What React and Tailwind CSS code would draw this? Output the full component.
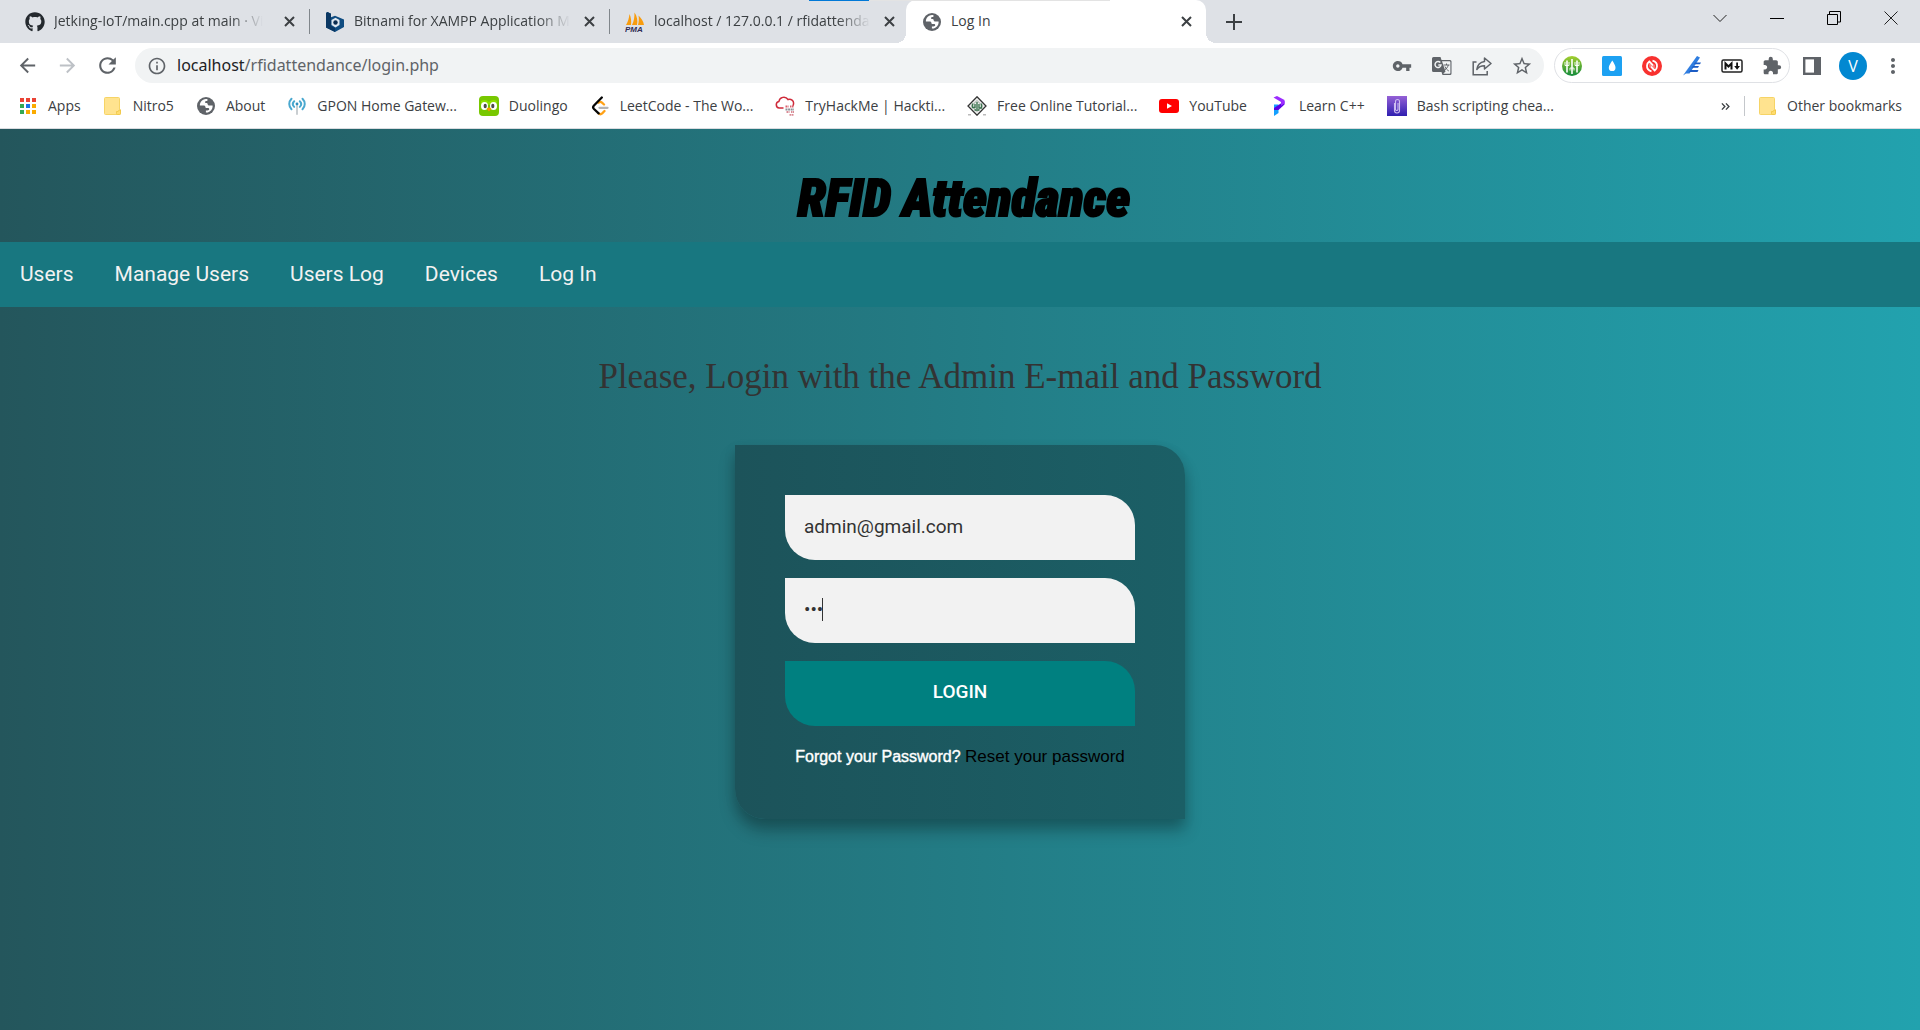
import { FaGithub } from "react-icons/fa";
import { MdVpnKey, MdExtension, MdStarBorder, MdMoreVert, MdArrowBack, MdArrowForward, MdRefresh, MdInfoOutline } from "react-icons/md";

const Globe = () => (
  <svg viewBox="0 0 18 18" className="size-[18px]">
    <circle cx="9" cy="9" r="9" fill="#5f6368" />
    <path d="M10.5 2.2c-2.6-.6-4.9.4-6.4 2.4-.9 1.2-1.3 2.6-1.2 4h3.6c1.3 0 1.9.7 2 1.7.1.6.6.8 1.3.8h1.1c.9 0 1.3.5 1.3 1.2 0 .9-.8 1.1-1.7 1.1H8.9v2.2c2.7 0 5.3-1.5 6.3-4.2.4-1 .5-2 .4-3h-3.3c-1 0-1.7-.6-1.7-1.5 0-.5-.4-.8-1-.8H8.2V4.700c0-.4.3-.7.7-.7h1c.4 0 .6-.3.6-.7z" fill="#fff" />
  </svg>
);

const Bitnami = () => (
  <svg viewBox="0 0 18 20" className="h-5 w-[18px]">
    <path d="M0 1l1.500-1L5 1.800v3.400l4-1.400 9 3.700V15l-9 5-9-4.500z" fill="#0f4c81" />
    <path d="M0 1l1.500-1L5 1.800V14l4 2.300V20l-9-4.500z" fill="#0a3763" />
    <path d="M9.500 5.800 13.500 8v5l-4 2.500-4-2.500V8z" fill="#dfe8f0" />
    <circle cx="9.500" cy="10.500" r="2.200" fill="#0a2c50" />
  </svg>
);

const PhpMyAdmin = () => (
  <svg viewBox="0 0 20 20" className="size-5">
    <path d="M1 13C3 10 4 6 4.500 2c1.500 3 2 7 1.500 11zM7 13c2-4 2.500-8 2.500-12.500C12 4 13 9 12 13zM13 13c1-3 1-7 .5-9.500C16 6 18.500 9 19 13z" fill="#f89c0e" />
    <text x="0" y="19.500" fontSize="8" fontWeight="900" fontStyle="italic" fontFamily="Liberation Sans, sans-serif" fill="#2f2d55">PMA</text>
  </svg>
);

const AppsGrid = () => {
  const colors = ["#ea4335", "#ea4335", "#ea4335", "#34a853", "#1a73e8", "#fbab00", "#34a853", "#fbab00", "#fbab00"];
  return (
    <span className="grid grid-cols-3 gap-[2px]">
      {colors.map((c, i) => (
        <svg key={i} viewBox="0 0 4 4" className="size-1"><rect width="4" height="4" fill={c} /></svg>
      ))}
    </span>
  );
};

const Folder = () => (
  <svg viewBox="0 0 18 18" className="size-[18px]">
    <path d="M1.500.5h13a1 1 0 0 1 1 1V12l1 1v3.500a1 1 0 0 1-1 1h-14a1 1 0 0 1-1-1v-15a1 1 0 0 1 1-1z" fill="#ffe38f" stroke="#f6d466" />
    <path d="M16.500 13v3.500a1 1 0 0 1-1 1h-2a1 1 0 0 1-1-1V14.500h1.700l.8-1.500z" fill="#ffdc6e" stroke="#efc545" strokeWidth=".8" />
  </svg>
);

const Antenna = () => (
  <svg viewBox="0 0 18 18" className="size-[18px]" fill="none" stroke="#4aa8cf" strokeWidth="2" strokeLinecap="round">
    <path d="M3.500 1.800c-3 3-3 7.500 0 10.500M14.500 1.800c3 3 3 7.500 0 10.500M6.200 4.200c-1.700 1.700-1.700 4 0 5.700M11.800 4.200c1.700 1.700 1.700 4 0 5.700" />
    <path d="M9 9v8" stroke="#c9ced1" />
    <circle cx="9" cy="7" r="1.400" fill="#2f8fbd" stroke="none" />
  </svg>
);

const Duolingo = () => (
  <svg viewBox="0 0 20 20" className="size-5">
    <rect width="20" height="20" rx="4" fill="#78c800" />
    <path d="M2 5c3-2 6-1 8 1 2-2 5-3 8-1v4H2z" fill="#8ee000" />
    <ellipse cx="5.500" cy="10" rx="3.500" ry="4" fill="#fff" />
    <ellipse cx="14.500" cy="10" rx="3.500" ry="4" fill="#fff" />
    <ellipse cx="6.200" cy="10" rx="1.600" ry="2.200" fill="#4b4b4b" />
    <ellipse cx="13.800" cy="10" rx="1.600" ry="2.200" fill="#4b4b4b" />
    <path d="M7.500 12.500 10 11.500l2.500 1L10 15.500z" fill="#ff9600" />
  </svg>
);

const LeetCode = () => (
  <svg viewBox="0 0 20 20" className="size-5" fill="none" strokeWidth="2.300" strokeLinecap="round">
    <path d="M14 8.500 12 6.700c-1-.9-2.500-.9-3.500 0M14.500 15l-2.300 2.400c-1 .9-2.600.9-3.600 0" stroke="#ffa116" />
    <path d="M8.600 17.400 4 13c-1-1-1-2.500 0-3.500l7.800-8" stroke="#070706" />
    <path d="M9.500 11.800h8" stroke="#b3b3b3" />
  </svg>
);

const TryHackMe = () => (
  <svg viewBox="0 0 20 20" className="size-5" fill="none">
    <path d="M8.500 12H4.200A3.300 3.300 0 0 1 3.900 5.500 5 5 0 0 1 13 3.500a4 4 0 0 1 5.500 4.400c0 .8-.3 1.300-.8 1.900" stroke="#cf2a3a" strokeWidth="1.500" />
    <path d="M10.500 10.500h3M15 10.500h4" stroke="#d9606c" strokeWidth="1.800" strokeDasharray="1.500 .5" />
    <path d="M10.500 13.500h8.500" stroke="#8b9097" strokeWidth="2" strokeDasharray="2 .6" />
    <path d="M11.500 16h3M16 16h3M14.500 18.800h4.500" stroke="#d98a94" strokeWidth="1.800" strokeDasharray="1.500 .5" />
  </svg>
);

const Tutorials = () => (
  <svg viewBox="0 0 20 20" className="size-5">
    <path d="M1 18.800h3M16 18.800h3" stroke="#bbb" strokeWidth="1.500" />
    <path d="M10 .8 19 10l-9 9.200L1 10z" fill="#eef0ee" stroke="#333" strokeWidth="1.300" />
    <path d="M10 4.500 15.500 10 10 15.500 4.500 10z" fill="none" stroke="#98a39b" strokeWidth="1" />
    <path d="M5.500 7.500v4h2.500V8m4 0v4h2.500V7.500M10 6v7M7.500 14h5" fill="none" stroke="#3d7350" strokeWidth="1.400" />
  </svg>
);

const LearnCpp = () => (
  <svg viewBox="0 0 20 20" className="size-5">
    <path d="M5 20V8.500h4.500V17z" fill="#14a0ff" />
    <path d="M5 12l10.500-7v3.500L9.500 14H5z" fill="#5a00e6" />
    <path d="M4.500 1.500 8 0l7.500 4v3.500l-3.500 2.300V6z" fill="#9b2cff" />
  </svg>
);

const Bash = () => (
  <svg viewBox="0 0 20 20" className="size-5">
    <defs><linearGradient id="bash" x1="0" y1="0" x2="0" y2="1"><stop stopColor="#9561d6" /><stop offset="1" stopColor="#2f1fb0" /></linearGradient></defs>
    <rect width="20" height="20" fill="url(#bash)" />
    <path d="M7.500 7v7.500a2.500 2.500 0 0 0 5 0V5.500a2 2 0 0 0-4 0v8a1.300 1.300 0 0 0 2.500 0V7" fill="none" stroke="#cdbcf0" strokeWidth="1.100" />
  </svg>
);

const YouTube = () => (
  <svg viewBox="0 0 20 20" className="size-5">
    <rect y="3" width="20" height="14" rx="3" fill="#f00" />
    <path d="M8 7.200v5.600l5-2.800z" fill="#fff" />
  </svg>
);

const Translate = () => (
  <svg viewBox="0 0 20 20" className="size-5">
    <path d="M1.500 1h7l1 3H18a1.500 1.500 0 0 1 1.500 1.500v12A1.500 1.500 0 0 1 18 19h-7.500l-1-3h-8A1.500 1.500 0 0 1 0 14.500v-12A1.500 1.500 0 0 1 1.500 1z" fill="#5f6368" />
    <path d="M10 5.200h7.700c.4 0 .7.300.7.700v11.200c0 .4-.3.700-.7.700h-6.500l2.300-2.300z" fill="#f1f3f4" />
    <path d="M8.300 6.600A3 3 0 1 0 9 9H6.300" fill="none" stroke="#f1f3f4" strokeWidth="1.500" />
    <path d="M11.500 9h6M14.500 7.500V9M16.300 9c-.6 2.300-2 3.800-3.500 5M13 10.500c.8 2 2 3.300 3.800 4.500" fill="none" stroke="#5f6368" strokeWidth="1" />
  </svg>
);

const Share = () => (
  <svg viewBox="0 0 20 20" className="size-5" fill="none" stroke="#5f6368" strokeWidth="1.500">
    <path d="M4.500 6H1.200v12.700h14V15" />
    <path d="M12.500 2 19 7.500 12.500 13V9.800c-3.500 0-6 1.200-7.700 3.700.6-4.300 3.200-7.300 7.700-8z" strokeLinejoin="round" />
  </svg>
);

const Forks = () => (
  <svg viewBox="0 0 20 20" className="size-5">
    <defs><linearGradient id="forks" x1="0" y1="0" x2="0" y2="1"><stop stopColor="#a4cf2e" /><stop offset="1" stopColor="#128a3c" /></linearGradient></defs>
    <circle cx="10" cy="10" r="10" fill="url(#forks)" />
    <path d="M5 4.500v12M10 3v15M15 4.500v12" fill="none" stroke="#fff" strokeWidth="1.600" />
    <path d="M3 6v3.500h4V6M8 14.500V12h4v2.500M13 6v3.500h4V6" fill="none" stroke="#fff" strokeWidth=".9" />
  </svg>
);

const Drop = () => (
  <svg viewBox="0 0 20 20" className="size-5">
    <rect width="20" height="20" rx="1.500" fill="#1da1f2" />
    <path d="M10.300 4.500c1.800 3 3.200 5 3.200 7.200a3.300 3.300 0 0 1-6.700 0c0-2.200 1.700-4.200 3.500-7.200z" fill="#fff" />
  </svg>
);

const Sync = () => (
  <svg viewBox="0 0 20 20" className="size-5">
    <circle cx="10" cy="10" r="10" fill="#f8312f" />
    <path d="M9.500 15.300C6.500 14.500 4.800 12 5 9.500c.1-1.800 1-3.200 2.300-4.100l3.700 4M10.500 4.700c3 .8 4.700 3.300 4.500 5.800-.1 1.800-1 3.200-2.300 4.100l-3.700-4" fill="none" stroke="#fff" strokeWidth="1.800" />
    <path d="M7.200 11.500V7l4.300 3zM12.800 8.500V13l-4.300-3z" fill="#fff" fillOpacity=".4" />
  </svg>
);

const Quill = () => (
  <svg viewBox="0 0 20 20" className="size-5">
    <path d="M15 0 18 1.500 7.500 17.500H4L1 19.500z" fill="#2f7de0" />
    <path d="M15 0 2 18l-.5 1L4 15z" fill="#7db4f5" />
    <path d="M13 6.500h6l-1 1.800h-6zM11 10h6l-1 1.800H9.500zM8.500 14h8l-1 2H7z" fill="#1b5cc4" />
  </svg>
);

const Markdown = () => (
  <svg viewBox="0 0 22 14" className="h-[14px] w-[22px]">
    <rect x="1" y="1" width="20" height="12" rx="1.500" fill="#fff" stroke="#222" strokeWidth="1.500" />
    <path d="M4.500 10.500V4.500L7.500 7.500l3-3v6" fill="none" stroke="#111" strokeWidth="2" />
    <path d="M15.200 3.500h1.800V7h2l-2.900 3.700L13.200 7h2z" fill="#111" />
  </svg>
);

const SidePanel = () => (
  <svg viewBox="0 0 18 18" className="size-[18px]">
    <rect x="1.200" y="1.200" width="15.600" height="15.600" fill="#fff" stroke="#5f6368" strokeWidth="2.400" />
    <rect x="11" y="1" width="6" height="16" fill="#5f6368" />
  </svg>
);

const Cross = () => (
  <svg viewBox="0 0 11 11" className="size-[11px]" stroke="#3c4043" strokeWidth="2"><path d="M1 1l9 9M10 1l-9 9" /></svg>
);

const tabs = [
  { icon: <FaGithub className="size-5 text-[#24292e]" />, title: "Jetking-IoT/main.cpp at main · Vi" },
  { icon: <Bitnami />, title: "Bitnami for XAMPP Application M" },
  { icon: <PhpMyAdmin />, title: "localhost / 127.0.0.1 / rfidattenda" },
  { icon: <Globe />, title: "Log In", active: true },
];

const Tab = ({ icon, title, active }) => (
  <div className={active ? "relative z-10 flex h-full w-[300px] items-center rounded-t-[10px] bg-white pl-4 pr-[14px]" : "flex h-full w-[300px] items-center pl-4 pr-[14px]"}>
    {active && <i className="absolute -left-[10px] bottom-0 size-[10px] bg-[radial-gradient(circle_at_0_0,#dee1e6_10px,#fff_10px)]" />}
    {active && <i className="absolute -right-[10px] bottom-0 size-[10px] bg-[radial-gradient(circle_at_100%_0,#dee1e6_10px,#fff_10px)]" />}
    <span className="flex w-5 shrink-0 justify-center">{icon}</span>
    <span className="ml-[9px] flex-1 whitespace-nowrap pb-px text-sm text-[#3c4043]">
      <span className={active ? "" : "[mask-image:linear-gradient(to_right,#000_85%,transparent)]"}>{title}</span>
    </span>
    <button aria-label={"Close " + title}><Cross /></button>
  </div>
);

const bookmarks = [
  { icon: <AppsGrid />, title: "Apps" },
  { icon: <Folder />, title: "Nitro5" },
  { icon: <Globe />, title: "About" },
  { icon: <Antenna />, title: "GPON Home Gatew..." },
  { icon: <Duolingo />, title: "Duolingo" },
  { icon: <LeetCode />, title: "LeetCode - The Wo..." },
  { icon: <TryHackMe />, title: "TryHackMe | Hackti..." },
  { icon: <Tutorials />, title: "Free Online Tutorial..." },
  { icon: <YouTube />, title: "YouTube" },
  { icon: <LearnCpp />, title: "Learn C++" },
  { icon: <Bash />, title: "Bash scripting chea..." },
];

const Browser = () => (
  <header className="font-['Open_Sans',sans-serif]">
    <div className="relative flex h-[43px] items-center bg-[#dee1e6] pl-[9px]">
      <div className="absolute left-[809px] top-0 z-20 flex h-px w-[301px] bg-[#e3e3e3]"><i className="h-px w-[60px] bg-[#0078d7]" /></div>
      <Tab {...tabs[0]} />
      <i className="-mr-px h-[25px] w-px bg-[#80868b]" />
      <Tab {...tabs[1]} />
      <i className="-mr-px h-[25px] w-px bg-[#80868b]" />
      <Tab {...tabs[2]} />
      <div className="-ml-[3px] h-full"><Tab {...tabs[3]} /></div>
      <button aria-label="New tab" className="ml-5">
        <svg viewBox="0 0 16 16" className="size-4" stroke="#3c4043" strokeWidth="2"><path d="M8 0v16M0 8h16" /></svg>
      </button>
      <div className="mr-px mb-[7px] ml-auto flex">
        <button aria-label="Search tabs" className="flex w-[57px] justify-center"><svg viewBox="0 0 14 14" className="size-[14px]" fill="none" stroke="#222"><path d="M.5 4 7 10.500 13.500 4" /></svg></button>
        <button aria-label="Minimize" className="flex w-[57px] justify-center"><svg viewBox="0 0 14 14" className="size-[14px]" stroke="#000"><path d="M0 7.500h14" /></svg></button>
        <button aria-label="Restore" className="flex w-[57px] justify-center"><svg viewBox="0 0 14 14" className="size-[14px]" fill="none" stroke="#000"><path d="M.5 3.500h10v10H.5zM2.500 3V.5h11v10.500H11" /></svg></button>
        <button aria-label="Close window" className="flex w-[57px] justify-center"><svg viewBox="0 0 14 14" className="size-[14px]" stroke="#222"><path d="M.5.5l13 13M13.500.5l-13 13" /></svg></button>
      </div>
    </div>

    <div className="flex h-[45px] items-center bg-white text-[#5f6368]">
      <button aria-label="Back" className="ml-4"><MdArrowBack className="size-[23px]" /></button>
      <button aria-label="Forward" className="ml-[17px] text-[#bdc1c6]"><MdArrowForward className="size-[23px]" /></button>
      <button aria-label="Reload" className="ml-4"><MdRefresh className="size-[25px]" /></button>
      <div className="ml-[15px] flex h-[35px] flex-1 items-center rounded-full bg-[#f1f3f4] pl-3 pr-3">
        <MdInfoOutline className="size-5 shrink-0" />
        <p className="ml-[10px] flex-1 pb-px font-['Noto_Sans',sans-serif] text-base"><span className="text-[#202124]">localhost</span>/rfidattendance/login.php</p>
        <div className="flex items-center gap-5">
          <button aria-label="Passwords"><MdVpnKey className="size-5" /></button>
          <button aria-label="Translate"><Translate /></button>
          <button aria-label="Share"><Share /></button>
          <button aria-label="Bookmark"><MdStarBorder className="size-5 scale-110" /></button>
        </div>
      </div>
      <div className="ml-[10px] flex h-[35px] items-center gap-5 rounded-full border border-[#dfe1e5] px-[7px]">
        <button aria-label="Connections"><Forks /></button>
        <button aria-label="Colour drop"><Drop /></button>
        <button aria-label="Sync"><Sync /></button>
        <button aria-label="Editor"><Quill /></button>
        <button aria-label="Markdown" className="-mx-px"><Markdown /></button>
        <button aria-label="Extensions"><MdExtension className="size-5" /></button>
      </div>
      <button aria-label="Side panel" className="ml-[13px]"><SidePanel /></button>
      <button aria-label="Profile" className="ml-[18px] flex size-7 items-center justify-center rounded-full bg-[#0288d1] text-base text-white">V</button>
      <button aria-label="Menu" className="ml-[14px] mr-[15px]"><MdMoreVert className="size-6" /></button>
    </div>

    <div className="flex h-[41px] items-center border-b border-[#dadce0] bg-white px-[18px] pb-1 text-sm text-[#3c4043]">
      <nav aria-label="Bookmarks" className="flex items-center gap-[22px]">
        {bookmarks.map((b) => (
          <a key={b.title} href="#" className="flex items-center whitespace-nowrap"><span className="mr-[10px] flex w-5 justify-center">{b.icon}</span>{b.title}</a>
        ))}
      </nav>
      <button aria-label="More bookmarks" className="ml-auto mr-[14px]">
        <svg viewBox="0 0 10 10" className="size-[9px]" fill="none" stroke="#3c4043" strokeWidth="1.500"><path d="M1 1.500 4.300 5 1 8.500M5.500 1.500 8.800 5 5.500 8.500" /></svg>
      </button>
      <i className="h-5 w-px bg-[#c4c7cb]" />
      <a href="#" className="ml-[14px] flex items-center gap-[10px]"><Folder />Other bookmarks</a>
    </div>
  </header>
);

export default function App() {
  return (
    <div className="flex min-h-screen flex-col">
      <Browser />
      <div className="flex-1 bg-[linear-gradient(to_right,#24565c,#22a2ae)]">
        <h1 className="pt-10 pb-[13px] pl-2 text-center font-['Roboto_Condensed',Anton,sans-serif] text-[51px] leading-[60px] font-black text-black italic [-webkit-text-stroke:2px_#000]">RFID Attendance</h1>
        <nav className="flex h-[65px] items-center gap-[41px] bg-[#187780] px-5 font-[Roboto,sans-serif] text-[21px] text-[#f2f2f2]">
          <a href="#">Users</a>
          <a href="#">Manage Users</a>
          <a href="#">Users Log</a>
          <a href="#">Devices</a>
          <a href="#">Log In</a>
        </nav>
        <main className="flex flex-col items-center pt-[50px]">
          <h2 className="font-['Liberation_Serif',serif] text-[35px] leading-10 text-[#333]">Please, Login with the Admin E-mail and Password</h2>
          <form className="mt-12 w-[450px] rounded-tr-[30px] rounded-bl-[30px] bg-linear-to-r from-[#1c535a] to-[#1b5f66] p-[50px] shadow-[0_12px_16px_rgba(0,0,0,0.26),0_4px_12px_rgba(0,0,0,0.1)]">
            <input aria-label="E-mail" type="email" defaultValue="admin@gmail.com" className="block h-[65px] w-full rounded-tr-[30px] rounded-bl-[30px] bg-[#f2f2f2] px-[19px] pb-[2px] font-[Roboto,sans-serif] text-[19px] text-[#333] outline-none" />
            <div className="relative mt-[18px]">
              <input aria-label="Password" type="password" defaultValue="123" className="block h-[65px] w-full rounded-tr-[30px] rounded-bl-[30px] bg-[#f2f2f2] px-[19px] pb-[2px] font-[Roboto,sans-serif] text-[19px] text-[#333] outline-none" />
              <i className="absolute left-[37px] top-5 h-[23px] w-px bg-[#333]" />
            </div>
            <button type="button" className="mt-[18px] block h-[65px] w-full rounded-tr-[30px] rounded-bl-[30px] bg-[#008080] pb-[2px] font-[Roboto,sans-serif] text-[19px] font-medium text-white">LOGIN</button>
            <p className="mt-[19px] text-center font-['Liberation_Sans',sans-serif] text-base leading-6 text-white">
              <span className="[-webkit-text-stroke:0.4px_#fff]">Forgot your Password?</span> <a href="#" className="text-[17px] text-black">Reset your password</a>
            </p>
          </form>
        </main>
      </div>
    </div>
  );
}
